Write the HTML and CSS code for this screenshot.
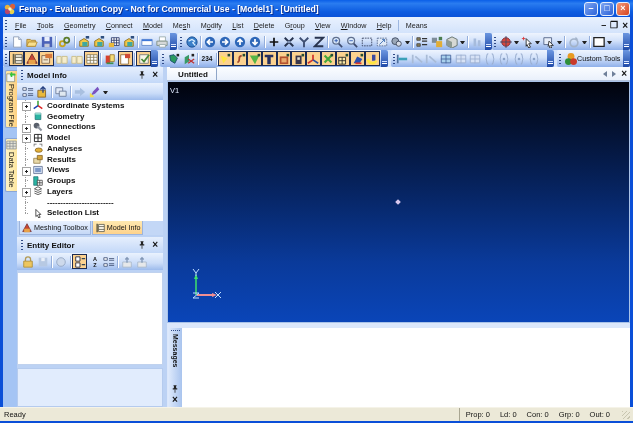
FILE: index.html
```html
<!DOCTYPE html>
<html lang="en">
<head>
<meta charset="utf-8">
<title>Femap</title>
<link rel="stylesheet" href="styles.css">
</head>
<body>
<svg class="defs" width="0" height="0" aria-hidden="true">
<symbol id="pin" viewBox="0 0 8 10"><path d="M2 0h4v1H5.500v3H7v1.500H1V4h1.500V1H2z" fill="#222"/><path d="M3.500 5.500h1V10h-1z" fill="#222"/></symbol>
<symbol id="flower" viewBox="0 0 14 14"><circle cx="4" cy="5" r="3" fill="#e8b13c"/><circle cx="10" cy="4" r="3" fill="#d9603a"/><circle cx="9" cy="10" r="3" fill="#e8d24c"/><circle cx="4" cy="10" r="3" fill="#b8476a"/><circle cx="7" cy="7" r="2" fill="#fff3c0"/></symbol>
<symbol id="new" viewBox="0 0 14 14"><path d="M3 1h6l3 3v9H3z" fill="#fff" stroke="#8a9ab5"/><path d="M9 1v3h3" fill="#dde6f5" stroke="#8a9ab5"/></symbol>
<symbol id="open" viewBox="0 0 14 14"><path d="M1 4h4l1 1h5v7H1z" fill="#e6c25c" stroke="#a9812c"/><path d="M3 7h10l-2 5H1z" fill="#f8e08e" stroke="#b48c34"/></symbol>
<symbol id="save" viewBox="0 0 14 14"><path d="M1 1h12v12H1z" fill="#4a62b8"/><path d="M4 1h6v5H4z" fill="#e8eefc"/><path d="M4 9h6v4H4z" fill="#c3c9d6"/></symbol>
<symbol id="link" viewBox="0 0 14 14"><circle cx="4" cy="9" r="3" fill="none" stroke="#c6a31c" stroke-width="2"/><circle cx="9" cy="5" r="3" fill="none" stroke="#5d7d2c" stroke-width="2"/></symbol>
<symbol id="mod" viewBox="0 0 14 14"><path d="M2 6l5-3 5 3v6H2z" fill="#f1c84a" stroke="#8e6c1a"/><path d="M5 7h6v5H5z" fill="#3fa8a0"/><path d="M9 0h4v3H9z" fill="#2f4f7f"/></symbol>
<symbol id="gridm" viewBox="0 0 14 14"><path d="M4 2h9v9H4z" fill="#fff" stroke="#2d3b6b"/><path d="M7 2v9M10 2v9M4 5h9M4 8h9" stroke="#2d3b6b"/><path d="M1 8h6v5H1z" fill="#e9b93c"/></symbol>
<symbol id="win" viewBox="0 0 14 14"><path d="M1 4h12v7H1z" fill="#fff" stroke="#5f86c9"/><path d="M1 4h12v2H1z" fill="#3f78d8"/></symbol>
<symbol id="print" viewBox="0 0 14 14"><path d="M4 1h7v5H4z" fill="#fff" stroke="#9aa"/><path d="M1 6h12v5H1z" fill="#d5d8d8" stroke="#7c8c80"/><path d="M4 10h7v3H4z" fill="#fff" stroke="#9aa"/></symbol>
<symbol id="globe" viewBox="0 0 14 14"><circle cx="7" cy="7" r="6" fill="#3a7fc8" stroke="#164a8f"/><path d="M3 6l4-2 3 2-2 2 3 3" fill="none" stroke="#d8ecff" stroke-width="1.500"/></symbol>
<symbol id="aL" viewBox="0 0 14 14"><circle cx="7" cy="7" r="6" fill="#2e67b8"/><path d="M10.500 7H4M7 4L4 7l3 3" fill="none" stroke="#fff" stroke-width="2"/></symbol>
<symbol id="aR" viewBox="0 0 14 14"><circle cx="7" cy="7" r="6" fill="#2e67b8"/><path d="M3.500 7H10M7 4l3 3-3 3" fill="none" stroke="#fff" stroke-width="2"/></symbol>
<symbol id="aU" viewBox="0 0 14 14"><circle cx="7" cy="7" r="6" fill="#2e67b8"/><path d="M7 10.500V4M4 7l3-3 3 3" fill="none" stroke="#fff" stroke-width="2"/></symbol>
<symbol id="aD" viewBox="0 0 14 14"><circle cx="7" cy="7" r="6" fill="#2e67b8"/><path d="M7 3.500V10M4 7l3 3 3-3" fill="none" stroke="#fff" stroke-width="2"/></symbol>
<symbol id="plus" viewBox="0 0 14 14"><path d="M7 2v10M2 7h10" stroke="#111" stroke-width="2"/></symbol>
<symbol id="ax" viewBox="0 0 14 14"><path d="M2 2l10 10M12 2L2 12" stroke="#28344f" stroke-width="2.200"/><path d="M5 7h4" stroke="#8ea3c5" stroke-width="2"/></symbol>
<symbol id="ay" viewBox="0 0 14 14"><path d="M2 2l5 5 5-5M7 7v6" fill="none" stroke="#3f4f72" stroke-width="2.200"/></symbol>
<symbol id="az" viewBox="0 0 14 14"><path d="M2 2h10L2 12h10" fill="none" stroke="#28344f" stroke-width="2.200"/></symbol>
<symbol id="zoomi" viewBox="0 0 14 14"><circle cx="6" cy="5.500" r="4" fill="#dcebfb" stroke="#61708f" stroke-width="1.500"/><path d="M9 9l4 4" stroke="#3d4a6d" stroke-width="2"/><path d="M4 5.500h4M6 3.500v4" stroke="#2a54b0"/></symbol>
<symbol id="zoomo" viewBox="0 0 14 14"><circle cx="6" cy="5.500" r="4" fill="#dcebfb" stroke="#61708f" stroke-width="1.500"/><path d="M9 9l4 4" stroke="#3d4a6d" stroke-width="2"/><path d="M4 5.500h4" stroke="#2a54b0"/></symbol>
<symbol id="dash" viewBox="0 0 14 14"><path d="M1.500 2.500h11v9h-11z" fill="none" stroke="#38435f" stroke-dasharray="2 1"/></symbol>
<symbol id="fit" viewBox="0 0 14 14"><path d="M1.500 2.500h11v9h-11z" fill="#dfe9f7" stroke="#5a6c90" stroke-dasharray="2 1"/><path d="M4 10l6-6M7 4h3v3" fill="none" stroke="#3a6aaf"/></symbol>
<symbol id="cam" viewBox="0 0 14 14"><circle cx="5" cy="6" r="4" fill="#9aa7b8" stroke="#39445a"/><circle cx="9" cy="9" r="3" fill="#d7dce6" stroke="#39445a"/></symbol>
<symbol id="list" viewBox="0 0 14 14"><path d="M1 2h4v3H1zM1 9h4v3H1z" fill="#8a7f55" stroke="#4a4a4a"/><path d="M7 3h6M7 6h6M7 10h6" stroke="#333" stroke-width="1.500"/></symbol>
<symbol id="mesh" viewBox="0 0 14 14"><path d="M1 2h6v6H1z" fill="#7f8d99"/><path d="M6 6h7v7H6z" fill="#e1ad36"/><path d="M9 1h4v4H9z" fill="#4c7d4f"/></symbol>
<symbol id="box" viewBox="0 0 14 14"><path d="M7 1l6 3v7l-6 3-6-3V4z" fill="#d6d8d4" stroke="#5e6a65"/><path d="M7 7v7L1 11V4z" fill="#8d9a92"/></symbol>
<symbol id="faded" viewBox="0 0 14 14"><path d="M3 3h3v9H3zM8 5h3v7H8z" fill="#a6bbdc"/></symbol>
<symbol id="target" viewBox="0 0 14 14"><circle cx="7" cy="7" r="5" fill="#d8483c" stroke="#7d2c3a"/><path d="M7 0v14M0 7h14" stroke="#3c4667"/></symbol>
<symbol id="cur" viewBox="0 0 14 14"><path d="M6 3l6 6H9l2 4-2 1-2-4-1 2z" fill="#fff" stroke="#222"/><path d="M1 3h4M3 1v4" stroke="#d33"/></symbol>
<symbol id="sel" viewBox="0 0 14 14"><path d="M1 2h9v8H1z" fill="#e7eefa" stroke="#4e5f82"/><path d="M7 6l5 5H9l1 3-2 0-1-3-1 1z" fill="#fff" stroke="#222"/></symbol>
<symbol id="rot" viewBox="0 0 14 14"><circle cx="7" cy="8" r="4.500" fill="none" stroke="#a3b3c9" stroke-width="2"/><path d="M9 1l3 3-4 1z" fill="#a3b3c9"/></symbol>
<symbol id="frame" viewBox="0 0 14 14"><path d="M1 2h12v10H1z" fill="#fff" stroke="#222" stroke-width="1.500"/></symbol>
<symbol id="tree" viewBox="0 0 14 14"><path d="M2 1h2v12H2z" fill="#5c5a44"/><path d="M5 2h8v10H5z" fill="#fbf7ea" stroke="#4b4a3e"/><path d="M5 5h8M5 9h8" stroke="#4b4a3e"/></symbol>
<symbol id="warn" viewBox="0 0 14 14"><path d="M7 1l6 11H1z" fill="#c84632" stroke="#71302d"/><path d="M3 8h8v5H3z" fill="#e8a247"/></symbol>
<symbol id="card" viewBox="0 0 14 14"><path d="M1 3h9v9H1z" fill="#f1e4c8" stroke="#81644a"/><path d="M5 1h8v5H5z" fill="#d7793c"/><path d="M3 8h5" stroke="#81644a"/></symbol>
<symbol id="dim" viewBox="0 0 14 14"><path d="M1 4h5v8H1zM7 4h6v8H7z" fill="#f5edcd" stroke="#c9bb85"/></symbol>
<symbol id="vgrid" viewBox="0 0 14 14"><path d="M1 2h12v10H1z" fill="#e6e4d6" stroke="#8e9396"/><path d="M5 2v10M9 2v10M1 5h12M1 8.500h12" stroke="#8e9396"/></symbol>
<symbol id="cells" viewBox="0 0 14 14"><path d="M1 2h12v10H1z" fill="#fff" stroke="#8a7d57"/><path d="M5 2v10M9 2v10M1 5h12M1 8.500h12" stroke="#8a7d57"/></symbol>
<symbol id="book" viewBox="0 0 14 14"><path d="M2 3h5v9H2z" fill="#d7402e"/><path d="M7 2h5v8H7z" fill="#f4dc76" stroke="#9b7b35"/><path d="M3 11h8v2H3z" fill="#3f8f4e"/></symbol>
<symbol id="doc" viewBox="0 0 14 14"><path d="M2 2h9v11H2z" fill="#fff" stroke="#8f6a38"/><path d="M7 1h6v5H7z" fill="#d04a36"/></symbol>
<symbol id="chk" viewBox="0 0 14 14"><path d="M2 2h10v10H2z" fill="#f8f6e6" stroke="#777"/><path d="M4 7l3 3 6-8" fill="none" stroke="#4a8a3a" stroke-width="2"/></symbol>
<symbol id="node" viewBox="0 0 14 14"><path d="M2 3l5-1 4 4-3 6-5-3z" fill="#2a9a5f" stroke="#15456d"/><path d="M10 1h3v3h-3z" fill="#222"/></symbol>
<symbol id="elem" viewBox="0 0 14 14"><path d="M2 5l5-3v8l-5 3z" fill="#3a9a66"/><path d="M6 7l7 5M13 7l-7 5" stroke="#b33" stroke-width="1.500"/><path d="M10 1h3v3h-3z" fill="#222"/></symbol>
<symbol id="b1" viewBox="0 0 14 14"><path d="M2 3l8 3-5 6z" fill="#ffe640"/><path d="M10 1h3v3h-3z" fill="#274d31"/></symbol>
<symbol id="b2" viewBox="0 0 14 14"><path d="M9 3C3 4 9 9 4 11" fill="none" stroke="#a2492f" stroke-width="2"/><path d="M10 1h3v3h-3z" fill="#274d31"/></symbol>
<symbol id="b3" viewBox="0 0 14 14"><path d="M1 3h11L7 13z" fill="#57b646"/><path d="M10 1h3v3h-3z" fill="#274d31"/></symbol>
<symbol id="b4" viewBox="0 0 14 14"><path d="M2 2h10v3H9v8H5V5H2z" fill="#27305f"/></symbol>
<symbol id="b5" viewBox="0 0 14 14"><path d="M2 4h10v9H2z" fill="#b5522e"/><path d="M4 6h6v5H4z" fill="#e9a96c"/><path d="M10 1h3v3h-3z" fill="#274d31"/></symbol>
<symbol id="b6" viewBox="0 0 14 14"><path d="M3 3h7v10H3z" fill="#39364a"/><path d="M5 5h3v3H5z" fill="#e8e2d0"/><path d="M10 1h3v3h-3z" fill="#274d31"/></symbol>
<symbol id="b7" viewBox="0 0 14 14"><path d="M7 2v6L1 12" fill="none" stroke="#d2342d" stroke-width="2"/><path d="M7 8l6 4" stroke="#2c4fa0" stroke-width="2"/></symbol>
<symbol id="b8" viewBox="0 0 14 14"><path d="M3 3l8 8M11 3l-8 8" stroke="#46a83a" stroke-width="2.500"/><path d="M10 1h3v3h-3z" fill="#274d31"/></symbol>
<symbol id="b9" viewBox="0 0 14 14"><path d="M2 5h8v8H2z" fill="#f9e9a8" stroke="#222"/><path d="M6 5v8M2 9h8" stroke="#222"/><path d="M10 1h3v3h-3z" fill="#274d31"/></symbol>
<symbol id="b10" viewBox="0 0 14 14"><path d="M2 12l4-8 6 3-3 5z" fill="#2a4fae"/><path d="M4 11h7v2H4z" fill="#d8382e"/><path d="M10 1h3v3h-3z" fill="#274d31"/></symbol>
<symbol id="b11" viewBox="0 0 14 14"><path d="M7 2h4v7H7z" fill="#3c4aa0"/><path d="M2 7c1 6 8 6 10 2" fill="none" stroke="#ffe640" stroke-width="3"/></symbol>
<symbol id="tee" viewBox="0 0 14 14"><path d="M2 2v10" stroke="#4e6f9e" stroke-width="2"/><path d="M3 7h10" stroke="#3aa0b8" stroke-width="3"/></symbol>
<symbol id="teef" viewBox="0 0 14 14"><path d="M2 2v10M5 4l8 7" stroke="#a9bbd6" stroke-width="2"/></symbol>
<symbol id="sq" viewBox="0 0 14 14"><path d="M1.500 2.500h11v9h-11z" fill="#a8d0ec" stroke="#45629a"/><path d="M7 2v10M1 7h12" stroke="#45629a"/></symbol>
<symbol id="sqf" viewBox="0 0 14 14"><path d="M1.500 2.500h11v9h-11z" fill="#d7e2f5" stroke="#9aaecf"/><path d="M7 2v10M1 7h12" stroke="#9aaecf"/></symbol>
<symbol id="br" viewBox="0 0 14 14"><path d="M5 1C2 1 4 7 2 7c2 0 0 6 3 6M9 1c3 0 1 6 3 6-2 0 0 6-3 6" fill="none" stroke="#9aaecf" stroke-width="1.200"/></symbol>
<symbol id="brd" viewBox="0 0 14 14"><path d="M5 1C2 1 4 7 2 7c2 0 0 6 3 6M9 1c3 0 1 6 3 6-2 0 0 6-3 6" fill="none" stroke="#9aaecf" stroke-width="1.200"/><circle cx="7" cy="7" r="1.500" fill="#8ba2c6"/></symbol>
<symbol id="balls" viewBox="0 0 14 14"><circle cx="7" cy="4" r="4" fill="#e89a22"/><circle cx="4" cy="10" r="4" fill="#2f8f3a"/><circle cx="10" cy="10" r="4" fill="#c93a2a"/></symbol>
<symbol id="axes" viewBox="0 0 14 14"><path d="M7 1v7" stroke="#2c9a2c" stroke-width="2"/><path d="M7 8l6 4" stroke="#d22" stroke-width="2"/><path d="M7 8l-6 4" stroke="#1a3fb0" stroke-width="2"/></symbol>
<symbol id="cyl" viewBox="0 0 14 14"><path d="M3 3h8v9H3z" fill="#2bb5a3" stroke="#1c6f73"/><path d="M3 3h8v2H3z" fill="#a9e6db"/></symbol>
<symbol id="wrench" viewBox="0 0 14 14"><circle cx="5" cy="5" r="4" fill="#59606b"/><path d="M6 6l6 6" stroke="#8e95a0" stroke-width="3"/></symbol>
<symbol id="gridt" viewBox="0 0 14 14"><path d="M2 2h10v10H2zM7 2v10M2 7h10" fill="none" stroke="#222" stroke-width="1.300"/></symbol>
<symbol id="analy" viewBox="0 0 14 14"><path d="M1 1h4v1H2v3H1zM13 1H9v1h3v3h1z" fill="#666"/><ellipse cx="8" cy="10" rx="5" ry="3" fill="#e3b13a" stroke="#7d5a1c"/></symbol>
<symbol id="res" viewBox="0 0 14 14"><path d="M1 6h9v7H1z" fill="#e8d9a8" stroke="#8a7440"/><path d="M6 2h7v6H6z" fill="#d4a63a" stroke="#7d5a1c"/></symbol>
<symbol id="views" viewBox="0 0 14 14"><path d="M1 2h12v10H1z" fill="#dbe6f7" stroke="#4d5f84"/><path d="M3 4h8v6H3z" fill="#7d99c8"/></symbol>
<symbol id="groups" viewBox="0 0 14 14"><path d="M1 1h6v12H1z" fill="#2bb5a3" stroke="#1c6f73"/><path d="M6 6h7v7H6zM9.500 6v7M6 9.500h7" fill="#fff" stroke="#333"/></symbol>
<symbol id="layers" viewBox="0 0 14 14"><path d="M2 4l5-3 5 3-5 2zM2 7l5 2 5-2M2 10l5 2 5-2" fill="#fff" stroke="#222"/></symbol>
<symbol id="arrow" viewBox="0 0 14 14"><path d="M4 2l7 7H8l2 4-2 1-2-4-2 2z" fill="#fff" stroke="#111"/></symbol>
<symbol id="mi1" viewBox="0 0 14 14"><path d="M1 2h4v3H1zM1 9h4v3H1z" fill="#fff" stroke="#46567a"/><path d="M7 3h6M7 5h6M7 9h6M7 11h6" stroke="#46567a"/></symbol>
<symbol id="mi2" viewBox="0 0 14 14"><path d="M1 5h9v8H1z" fill="#e9b93c" stroke="#84602a"/><path d="M7 8V2M4 4l3-3 3 3" fill="none" stroke="#253f80" stroke-width="1.500"/></symbol>
<symbol id="mi3" viewBox="0 0 14 14"><path d="M1 2h8v7H1z" fill="#e3eaf6" stroke="#6a7b99"/><path d="M5 6h8v6H5z" fill="#dfe8f0" stroke="#6a7b99"/></symbol>
<symbol id="mi4" viewBox="0 0 14 14"><path d="M1 5h6V2l6 5-6 5V9H1z" fill="#a9c0e0"/></symbol>
<symbol id="mi5" viewBox="0 0 14 14"><path d="M2 11l3-5 5-5 2 3-5 5z" fill="#7a53c0"/><path d="M1 8l5 4-1 1H1z" fill="#f2dd52"/></symbol>
<symbol id="lock" viewBox="0 0 14 14"><path d="M4 6V4a3 3 0 0 1 6 0v2" fill="none" stroke="#b29a55" stroke-width="1.500"/><path d="M2 6h10v7H2z" fill="#edc65f" stroke="#b08d38"/></symbol>
<symbol id="fsave" viewBox="0 0 14 14"><path d="M2 2h10v10H2z" fill="#b7c9e3"/><path d="M5 2h4v4H5z" fill="#e9eff9"/></symbol>
<symbol id="frot" viewBox="0 0 14 14"><circle cx="7" cy="7" r="5" fill="#cdd9eb" stroke="#92a5c2"/></symbol>
<symbol id="az9" viewBox="0 0 14 14"><path d="M2 1h5v5H2zM2 8h5v5H2z" fill="#fff" stroke="#223"/><path d="M9 3h4M9 10h4" stroke="#345" stroke-width="1.500"/></symbol>
<symbol id="fup" viewBox="0 0 14 14"><path d="M2 7h10v6H2z" fill="#e6e8ea" stroke="#a8b8cc"/><path d="M7 8V2M5 4l2-2 2 2" fill="none" stroke="#8297b5" stroke-width="1.500"/></symbol>
<symbol id="vprog" viewBox="0 0 14 14"><path d="M1 3h10v10H1z" fill="#f4f6f4" stroke="#8a8f7a"/><path d="M7 1v6M5 4h7" stroke="#35c53a" stroke-width="2"/></symbol>
</svg>

<div class="window">
  <header class="title">
    <svg class="ic"><use href="#flower"/></svg>
    <span class="title-text">Femap - Evaluation Copy - Not for Commercial Use - [Model1] - [Untitled]</span>
    <span class="caps"><span class="cap">&#8211;</span><span class="cap">&#9633;</span><span class="cap close">&#215;</span></span>
  </header>

  <nav class="menu">
    <span class="grip"></span>
    <span class="m"><u>F</u>ile</span><span class="m"><u>T</u>ools</span><span class="m"><u>G</u>eometry</span><span class="m"><u>C</u>onnect</span><span class="m"><u>M</u>odel</span><span class="m">Me<u>s</u>h</span><span class="m">M<u>o</u>dify</span><span class="m"><u>L</u>ist</span><span class="m"><u>D</u>elete</span><span class="m">G<u>r</u>oup</span><span class="m"><u>V</u>iew</span><span class="m"><u>W</u>indow</span><span class="m"><u>H</u>elp</span><span class="menu-sep"></span><span class="m">Means</span>
    <span class="menu-ctl"><span>&#8211;</span><span>&#10064;</span><b>&#215;</b></span>
  </nav>

  <div class="bar">
    <div class="band w1">
      <span class="grip"></span>
      <svg class="i"><use href="#new"/></svg><svg class="i"><use href="#open"/></svg><svg class="i"><use href="#save"/></svg><i class="s"></i>
      <svg class="i"><use href="#link"/></svg><i class="s"></i>
      <svg class="i"><use href="#mod"/></svg><svg class="i"><use href="#mod"/></svg><svg class="i"><use href="#gridm"/></svg><svg class="i"><use href="#mod"/></svg><i class="s"></i>
      <svg class="i"><use href="#win"/></svg><svg class="i"><use href="#print"/></svg>
      <span class="chev"></span>
    </div>
    <div class="band w2">
      <span class="grip"></span>
      <svg class="i"><use href="#globe"/></svg><i class="s"></i>
      <svg class="i"><use href="#aL"/></svg><svg class="i"><use href="#aR"/></svg><svg class="i"><use href="#aU"/></svg><svg class="i"><use href="#aD"/></svg><i class="s"></i>
      <svg class="i"><use href="#plus"/></svg><svg class="i"><use href="#ax"/></svg><svg class="i"><use href="#ay"/></svg><svg class="i"><use href="#az"/></svg><i class="s"></i>
      <svg class="i"><use href="#zoomi"/></svg><svg class="i"><use href="#zoomo"/></svg><svg class="i"><use href="#dash"/></svg><svg class="i"><use href="#fit"/></svg><svg class="i"><use href="#cam"/></svg><span class="dd"></span><i class="s"></i>
      <svg class="i"><use href="#list"/></svg><svg class="i"><use href="#mesh"/></svg><svg class="i"><use href="#box"/></svg><span class="dd"></span><i class="s"></i>
      <svg class="i"><use href="#faded"/></svg>
      <span class="chev"></span>
    </div>
    <div class="band grow">
      <span class="grip"></span>
      <svg class="i"><use href="#target"/></svg><span class="dd"></span>
      <svg class="i"><use href="#cur"/></svg><span class="dd"></span>
      <svg class="i"><use href="#sel"/></svg><span class="dd"></span><i class="s"></i>
      <svg class="i"><use href="#rot"/></svg><span class="dd"></span><i class="s"></i>
      <svg class="i"><use href="#frame"/></svg><span class="dd"></span>
      <span class="chev"></span>
    </div>
  </div>

  <div class="bar">
    <div class="band w3">
      <span class="grip"></span>
      <span class="on"><svg class="i"><use href="#tree"/></svg></span><span class="on"><svg class="i"><use href="#warn"/></svg></span><span class="on"><svg class="i"><use href="#card"/></svg></span>
      <svg class="i"><use href="#dim"/></svg><svg class="i"><use href="#dim"/></svg>
      <span class="on"><svg class="i"><use href="#cells"/></svg></span><i class="s"></i>
      <svg class="i"><use href="#book"/></svg><span class="on"><svg class="i"><use href="#doc"/></svg></span><i class="s"></i>
      <span class="on"><svg class="i"><use href="#chk"/></svg></span>
      <span class="chev"></span>
    </div>
    <div class="band w4">
      <span class="grip"></span>
      <svg class="i"><use href="#node"/></svg><svg class="i"><use href="#elem"/></svg><i class="s"></i>
      <span class="num">234</span><i class="s"></i>
      <span class="on"><svg class="i"><use href="#b1"/></svg></span><span class="on"><svg class="i"><use href="#b2"/></svg></span><span class="on"><svg class="i"><use href="#b3"/></svg></span><span class="on"><svg class="i"><use href="#b4"/></svg></span><span class="on"><svg class="i"><use href="#b5"/></svg></span><span class="on"><svg class="i"><use href="#b6"/></svg></span><span class="on"><svg class="i"><use href="#b7"/></svg></span><span class="on"><svg class="i"><use href="#b8"/></svg></span><span class="on"><svg class="i"><use href="#b9"/></svg></span><span class="on"><svg class="i"><use href="#b10"/></svg></span><span class="on"><svg class="i"><use href="#b11"/></svg></span>
      <span class="chev"></span>
    </div>
    <div class="band w5">
      <span class="grip"></span>
      <svg class="i"><use href="#tee"/></svg><svg class="i"><use href="#teef"/></svg><svg class="i"><use href="#teef"/></svg>
      <svg class="i"><use href="#sq"/></svg><svg class="i"><use href="#sqf"/></svg><svg class="i"><use href="#sqf"/></svg>
      <svg class="i"><use href="#br"/></svg><svg class="i"><use href="#brd"/></svg><svg class="i"><use href="#brd"/></svg><svg class="i"><use href="#brd"/></svg>
      <span class="chev"></span>
    </div>
    <div class="band grow">
      <span class="grip"></span>
      <svg class="i"><use href="#balls"/></svg><span class="ct">Custom Tools</span>
      <span class="chev"></span>
    </div>
  </div>

  <div class="main">
    <aside class="strip">
      <div class="vtab first"><svg class="ti"><use href="#vprog"/></svg><span class="v">Program File</span></div>
      <div class="vtab second"><svg class="ti"><use href="#vgrid"/></svg><span class="v">Data Table</span></div>
    </aside>

    <section class="left">
      <div class="phead"><span class="grip"></span><span class="pt">Model Info</span><svg class="pin"><use href="#pin"/></svg><span class="px">&#215;</span></div>
      <div class="ptools">
        <svg class="i"><use href="#mi1"/></svg><svg class="i"><use href="#mi2"/></svg><i class="s"></i><svg class="i"><use href="#mi3"/></svg><i class="s"></i><svg class="i"><use href="#mi4"/></svg><svg class="i"><use href="#mi5"/></svg><span class="dd"></span>
      </div>
      <div class="tree">
        <div class="row"><span class="ex"></span><svg class="ti"><use href="#axes"/></svg><b>Coordinate Systems</b></div>
        <div class="row"><span class="noex"></span><svg class="ti"><use href="#cyl"/></svg><b>Geometry</b></div>
        <div class="row"><span class="ex"></span><svg class="ti"><use href="#wrench"/></svg><b>Connections</b></div>
        <div class="row"><span class="ex"></span><svg class="ti"><use href="#gridt"/></svg><b>Model</b></div>
        <div class="row"><span class="noex"></span><svg class="ti"><use href="#analy"/></svg><b>Analyses</b></div>
        <div class="row"><span class="noex"></span><svg class="ti"><use href="#res"/></svg><b>Results</b></div>
        <div class="row"><span class="ex"></span><svg class="ti"><use href="#views"/></svg><b>Views</b></div>
        <div class="row"><span class="noex"></span><svg class="ti"><use href="#groups"/></svg><b>Groups</b></div>
        <div class="row"><span class="ex"></span><svg class="ti"><use href="#layers"/></svg><b>Layers</b></div>
        <div class="row"><span class="noex"></span><span class="ti"></span><b class="dashes">-------------------------</b></div>
        <div class="row"><span class="noex lastn"></span><svg class="ti"><use href="#arrow"/></svg><b>Selection List</b></div>
      </div>
      <div class="ltabs">
        <span class="ltab"><svg class="ti"><use href="#warn"/></svg>Meshing Toolbox</span>
        <span class="ltab act"><svg class="ti"><use href="#tree"/></svg>Model Info</span>
      </div>
      <div class="phead p2"><span class="grip"></span><span class="pt">Entity Editor</span><svg class="pin"><use href="#pin"/></svg><span class="px">&#215;</span></div>
      <div class="ptools">
        <svg class="i"><use href="#lock"/></svg><svg class="i"><use href="#fsave"/></svg><i class="s"></i><svg class="i"><use href="#frot"/></svg><i class="s"></i>
        <span class="on"><svg class="i"><use href="#az9"/></svg></span><span class="az">A<br>Z</span><svg class="i"><use href="#mi1"/></svg><i class="s"></i><svg class="i"><use href="#fup"/></svg><svg class="i"><use href="#fup"/></svg>
      </div>
      <div class="ewhite"></div>
      <div class="ebox"></div>
    </section>

    <section class="right">
      <div class="tabrow">
        <span class="doc-tab">Untitled</span>
        <span class="tabctl"><span class="tri l"></span><span class="tri r"></span><b>&#215;</b></span>
      </div>
      <div class="canvas">
        <span class="v1">V1</span>
        <span class="dot"></span>
        <svg class="gizmo" viewBox="0 0 36 36" width="36" height="36" aria-hidden="true">
          <path d="M8 9v18" stroke="#3fe36b" stroke-width="1.500"/><path d="M8 6l-2 5h4z" fill="#3fe36b"/>
          <path d="M9 27h16" stroke="#ef8e93" stroke-width="2"/><path d="M29 27l-5-2v4z" fill="#ef8e93"/>
          <path d="M5 1l3 4 3-4M8 5v3M27 24l6 6M33 24l-6 6M5 25h6l-6 5h6" fill="none" stroke="#bfe0ff"/>
        </svg>
      </div>
      <div class="msgs">
        <div class="msgtab"><span class="mdots"></span><span class="v mt">Messages</span><svg class="pin r"><use href="#pin"/></svg><span class="px">&#215;</span></div>
        <div class="msgbody"></div>
      </div>
    </section>
  </div>

  <footer class="status">
    <span class="ready">Ready</span>
    <span class="cells"><span>Prop: 0</span><span>Ld: 0</span><span>Con: 0</span><span>Grp: 0</span><span>Out: 0</span></span>
    <span class="sizer"></span>
  </footer>
</div>
</body>
</html>
```
FILE: styles.css
```css
* { box-sizing: border-box; }
html, body { margin: 0; padding: 0; }
body { width: 633px; height: 423px; overflow: hidden; font-family: "Liberation Sans", Arial, sans-serif; font-size: 8px; color: #111; background: #0a4fd8; }
.defs { position: absolute; }
.window { width: 633px; height: 423px; display: flex; flex-direction: column; background: #0a4fd8; padding: 0 3px 2px; filter: blur(0.3px); }

.title { height: 17px; flex: none; margin: 0 -3px; padding: 0 3px 0 4px; display: flex; align-items: center; gap: 3px; background: linear-gradient(#0a5fe8, #2a7cf0 20%, #0c5be0 70%, #0a52d8); color: #fff; }
.ic { width: 12px; height: 12px; flex: none; }
.title-text { font-weight: 700; font-size: 8.700px; text-shadow: 1px 1px 0 #0a2f90; flex: 1; white-space: nowrap; }
.caps { display: flex; gap: 2px; }
.cap { width: 14px; height: 14px; border: 1px solid #e6eefc; border-radius: 3px; background: linear-gradient(135deg, #7ea6f2, #2d62d8); color: #fff; font-size: 9px; line-height: 11px; text-align: center; font-weight: 700; }
.cap.close { background: linear-gradient(135deg, #f09a7c, #d9451e); }

.menu { height: 16px; flex: none; display: flex; align-items: center; background: linear-gradient(#e9f1fe, #d3e3fb); }
.m { font-size: 7.200px; margin-right: 10.300px; color: #1a1a1a; white-space: nowrap; }
.menu .grip { margin-right: 8px; }
.menu-sep { width: 1px; height: 11px; background: #9db7e0; margin: 0 7px 0 -4px; }
.menu-ctl { margin-left: auto; margin-right: 2px; display: flex; gap: 4px; font-size: 9px; align-items: center; font-weight: 700; }
.menu-ctl b { font-size: 10px; }

.grip { width: 2px; height: 10px; flex: none; margin: 0 2px; background: repeating-linear-gradient(#2f4a85 0 1px, transparent 1px 3px); }

.bar { height: 17px; flex: none; display: flex; background: #d6e5fb; }
.band { display: flex; align-items: center; height: 17px; background: linear-gradient(#eef4fe, #d3e2fa 45%, #8fb0ea); border-radius: 2px; margin-right: 1px; }
.w1 { width: 174px; }
.w2 { width: 313px; }
.w3 { width: 155px; margin-right: 2px; }
.w4 { width: 228px; margin-right: 3px; }
.w5 { width: 163px; margin-right: 3px; }
.w4 .on { width: 14.700px; }
.w5 .grip { margin-right: 0; }
.w5 .i { margin: 0 1.300px; }
.grow { flex: 1; margin-right: 0; }
.chev { margin-left: auto; width: 7px; height: 17px; flex: none; background: linear-gradient(#6b96e0, #1f4aa8); position: relative; border-radius: 0 2px 2px 0; }
.chev::after { content: ""; position: absolute; left: 1px; bottom: 3px; width: 5px; height: 1px; background: #fff; box-shadow: 0 -2px 0 0 #cfe0ff; }
.i { width: 12px; height: 12px; margin: 0 1.500px; flex: none; display: block; }
.s { width: 1px; height: 12px; margin: 0 1.250px; flex: none; background: #94aedb; box-shadow: 1px 0 0 #fff; }
.dd { width: 5px; height: 0; margin: 1px 0.750px 0; flex: none; border: 2.500px solid transparent; border-top: 3px solid #222; border-bottom: 0; }
.on { display: flex; align-items: center; justify-content: center; width: 15px; height: 15px; flex: none; background: #fcd28f; border: 1px solid #1c2b52; }
.on .i { margin: 0; }
.num { font-size: 6.500px; font-weight: 700; width: 15px; text-align: center; flex: none; }
.ct { font-size: 7.200px; white-space: nowrap; color: #111; margin-left: -1px; }

.main { flex: 1; display: flex; min-height: 0; background: #bcd2f4; }
.strip { width: 14px; flex: none; background: #a4c4f4; display: flex; flex-direction: column; align-items: flex-end; padding-top: 3px; }
.vtab { width: 12px; display: flex; flex-direction: column; align-items: center; gap: 1px; background: linear-gradient(90deg, #ffe9a8, #fdd082); border: 1px solid #8aa5d6; border-right: 0; border-radius: 2px 0 0 2px; }
.vtab.first { height: 58px; }
.vtab.second { height: 54px; margin-top: 10px; background: linear-gradient(90deg, #fff3c4, #fde6a0); }
.vtab .ti { margin: 0; width: 11px; height: 12px; }
.v { writing-mode: vertical-rl; font-size: 7.500px; white-space: nowrap; }

.left { width: 146px; flex: none; display: flex; flex-direction: column; }
.phead { height: 16px; flex: none; display: flex; align-items: center; padding-right: 5px; background: linear-gradient(#e6effd, #c3d8f8); }
.phead .grip { margin-left: 4px; }
.phead.p2 { margin-top: 2px; }
.pt { font-weight: 700; font-size: 8px; flex: 1; margin-left: 2px; }
.pin { width: 6px; height: 8px; flex: none; margin-right: 7px; display: block; }
.px { font-size: 10px; font-weight: 700; line-height: 8px; }
.ptools { height: 17px; flex: none; display: flex; align-items: center; padding-left: 3px; background: linear-gradient(#eaf2fe, #cadcf8 60%, #9dbbec); }
.ptools + .ewhite { margin-top: 2px; }
.tree { height: 121px; flex: none; background: #fff; display: flex; flex-direction: column; }
.row { height: 10.750px; flex: none; display: flex; align-items: center; }
.row b { font-size: 8px; white-space: nowrap; }
.ex, .noex { width: 7px; height: 10.750px; margin: 0 3px 0 5px; flex: none; position: relative; background: repeating-linear-gradient(#9a9a9a 0 1px, transparent 1px 2px) 3px 0 / 1px 100% no-repeat, repeating-linear-gradient(90deg, #9a9a9a 0 1px, transparent 1px 2px) 3px 5px / 7px 1px no-repeat; }
.lastn { background-size: 1px 50%, 7px 1px; }
.ex::after { content: ""; position: absolute; left: 0; top: 2px; width: 7px; height: 7px; border: 1px solid #a5a5a5; background: linear-gradient(#222, #222) 50% 50% / 3px 1px no-repeat, linear-gradient(#222, #222) 50% 50% / 1px 3px no-repeat, #fff; }
.ti { width: 12px; height: 10px; margin: 0 3px 0 0; flex: none; display: block; }
.ltabs { height: 14px; flex: none; display: flex; gap: 1px; padding: 0 0 0 2px; background: #c3d7f6; }
.ltab { display: flex; align-items: center; font-size: 7.200px; padding: 0 2px 0 1px; background: linear-gradient(#e9f1fe, #c5d8f6); border: 1px solid #9cb4dc; border-top: 0; white-space: nowrap; }
.ltab .ti { margin-right: 1px; }
.ltab.act { background: linear-gradient(#ffe9b0, #fdd28c); }
.az { font-size: 5.500px; font-weight: 700; line-height: 6px; width: 12px; text-align: center; flex: none; margin-left: 2px; }
.ewhite { height: 93px; flex: none; background: #fff; border: 1px solid #c0d2ee; }
.ebox { height: 39px; flex: none; margin-top: 3px; background: #e1ecfd; border: 1px solid #b5cbee; }

.right { flex: 1; min-width: 0; display: flex; flex-direction: column; margin-left: 4px; background: #dbe7fb; }
.tabrow { height: 14px; flex: none; display: flex; align-items: flex-end; justify-content: space-between; padding-left: 3px; background: linear-gradient(#fbfdff, #e9f0fb); border-bottom: 1px solid #b4c3dc; }
.doc-tab { width: 47px; height: 13px; font-weight: 700; font-size: 8px; text-align: center; line-height: 13px; background: linear-gradient(#fff, #eaf1fc); border: 1px solid #8fa6c8; border-bottom: 0; border-left: 0; border-radius: 0 2px 0 0; position: relative; }
.doc-tab::before { content: ""; position: absolute; left: -3px; top: 0; width: 8px; height: 13px; border-left: 1px solid #8fa6c8; transform: skewX(-30deg); background: #fff; z-index: -1; }
.tabctl { display: flex; align-items: center; gap: 5px; height: 13px; padding-right: 3px; }
.tabctl b { font-size: 10px; line-height: 8px; }
.tri { width: 0; height: 0; border: 3px solid transparent; }
.tri.l { border-right: 4px solid #6e7f99; border-left: 0; }
.tri.r { border-left: 4px solid #6e7f99; border-right: 0; }
.canvas { height: 242px; flex: none; position: relative; background: linear-gradient(#01030c, #0a3a9a 75%, #0a45b8); border: 1px solid #a9c2e8; color: #dfe9ff; }
.v1 { position: absolute; left: 2px; top: 4px; font-size: 7.500px; }
.dot { position: absolute; left: 228px; top: 118px; width: 4px; height: 4px; background: #d9c9ee; transform: rotate(45deg); }
.gizmo { position: absolute; left: 20px; top: 186px; }
.msgs { height: 80px; flex: none; margin-top: 5px; display: flex; }
.msgtab { width: 14px; flex: none; margin-left: 1px; display: flex; flex-direction: column; align-items: center; background: linear-gradient(90deg, #dfeafc, #a9c4ee); }
.mdots { width: 9px; height: 1px; margin: 2px 0 3px; background: repeating-linear-gradient(90deg, #2f4a85 0 1px, transparent 1px 2px); }
.mt { font-weight: 700; font-size: 7px; flex: 1; }
.pin.r { margin: 0 0 3px; }
.msgtab .px { margin-bottom: 4px; }
.msgbody { flex: 1; background: #fff; }

.status { height: 14px; flex: none; display: flex; align-items: center; background: #ece9d8; font-size: 7.500px; margin: 0 -3px; padding: 0 3px 0 4px; position: relative; border-top: 1px solid #f5f3e8; }
.ready { flex: 1; }
.cells { display: flex; height: 13px; align-items: center; padding-left: 6px; border-left: 1px solid #a9a692; margin-right: 20px; gap: 10px; }
.sizer { width: 8px; height: 8px; position: absolute; right: 3px; bottom: 2px; background: repeating-linear-gradient(135deg, #c8c5b0 0 1px, transparent 1px 3px); }
```
